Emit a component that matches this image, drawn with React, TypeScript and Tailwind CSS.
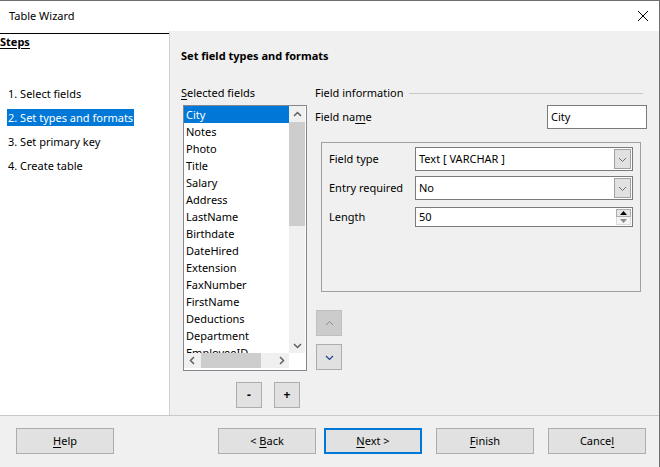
import * as React from 'react';

const steps = ['1. Select fields', '2. Set types and formats', '3. Set primary key', '4. Create table'];

const fields = [
  'City',
  'Notes',
  'Photo',
  'Title',
  'Salary',
  'Address',
  'LastName',
  'Birthdate',
  'DateHired',
  'Extension',
  'FaxNumber',
  'FirstName',
  'Deductions',
  'Department',
  'EmployeeID',
];

const chevrons = {
  up: '1,6 4.5,2.5 8,6',
  down: '1,3 4.5,6.5 8,3',
  left: '6,1 2.5,4.5 6,8',
  right: '3,1 6.5,4.5 3,8',
};

const Chevron = ({ dir, color = '#606060', width = 1.5 }: { dir: keyof typeof chevrons; color?: string; width?: number }) => (
  <svg width="9" height="9" viewBox="0 0 9 9">
    <polyline points={chevrons[dir]} fill="none" stroke={color} strokeWidth={width} />
  </svg>
);

const U = ({ children }: { children: React.ReactNode }) => (
  <span className="underline underline-offset-2">{children}</span>
);

const Combo = ({ value }: { value: string }) => (
  <div className="flex h-[24px] w-[218px] border border-[#7a7a7a] bg-white">
    <div className="flex flex-1 items-center pl-[3px]">{value}</div>
    <div className="my-px mr-px flex w-[17px] items-center justify-center border border-[#a0a0a0] bg-[#e1e1e1]">
      <Chevron dir="down" color="#707070" width={1} />
    </div>
  </div>
);

const Spin = ({ value }: { value: string }) => (
  <div className="flex h-[20px] w-[218px] border border-[#7a7a7a] bg-white">
    <div className="flex flex-1 items-center pl-[3px]">{value}</div>
    <div className="my-px mr-px flex w-[15px] flex-col">
      <div className="flex h-[8px] items-center justify-center border border-[#adadad] bg-[#e5e5e5]">
        <svg width="7" height="4" viewBox="0 0 7 4">
          <polygon points="0,4 3.5,0 7,4" fill="#000" />
        </svg>
      </div>
      <div className="flex flex-1 items-center justify-center border border-t-0 border-[#dadada] bg-[#f4f4f4]">
        <svg width="7" height="4" viewBox="0 0 7 4">
          <polygon points="0,0 3.5,4 7,0" fill="#8a8a8a" />
        </svg>
      </div>
    </div>
  </div>
);

const WizButton = ({ children, primary, className }: { children: React.ReactNode; primary?: boolean; className?: string }) => (
  <div
    className={`flex h-[26px] w-[98px] items-center justify-center bg-[#e1e1e1] ${
      primary ? 'border-2 border-[#0078d7]' : 'border border-[#adadad]'
    } ${className ?? ''}`}
  >
    {children}
  </div>
);

const SmallButton = ({ children, disabled }: { children: React.ReactNode; disabled?: boolean }) => (
  <div
    className={`flex h-[26px] w-[26px] items-center justify-center border ${
      disabled ? 'border-[#bfbfbf] bg-[#cccccc]' : 'border-[#adadad] bg-[#e1e1e1]'
    }`}
  >
    {children}
  </div>
);

export default function App() {
  return (
    <div className="flex h-[467px] w-[660px] flex-col overflow-hidden border-t border-r border-[#6e6e6e] bg-[#f0f0f0] font-['Noto_Sans',sans-serif] text-[11px] leading-[16px] text-black">
      {/* title bar */}
      <div className="flex h-[30px] shrink-0 items-center justify-between bg-white pl-[9px] pr-[11px]">
        <span>Table Wizard</span>
        <svg width="10" height="10" viewBox="0 0 10 10">
          <path d="M0 0L10 10M10 0L0 10" stroke="#000" strokeWidth="1" />
        </svg>
      </div>

      <div className="flex h-[384px] shrink-0">
        {/* steps panel */}
        <div className="w-[170px] border-r border-[#d0d0d0] bg-white">
          <div className="mt-[2px] border-t border-black">
            <div className="font-bold underline underline-offset-2">Steps</div>
            <div className="mt-[35px] flex flex-col gap-[7px] pl-[7px]">
              {steps.map((s, i) => (
                <div key={s} className="h-[17px] leading-[17px]">
                  <span className={`inline-block px-px ${i === 1 ? 'bg-[#0078d7] text-white' : ''}`}>{s}</span>
                </div>
              ))}
            </div>
          </div>
        </div>

        {/* page */}
        <div className="flex-1 pt-[17px]">
          <div className="pl-[11px] font-bold">Set field types and formats</div>

          <div className="mt-[21px] flex pl-[11px]">
            {/* selected fields */}
            <div className="w-[126px]">
              <div>
                <U>S</U>elected fields
              </div>
              <div className="ml-[2px] mt-[4px] flex h-[266px] w-[124px] flex-col border border-[#828790] bg-white">
                <div className="flex h-[247px]">
                  <div className="flex-1 overflow-hidden">
                    {fields.map((f, i) => (
                      <div
                        key={f}
                        className={`h-[17px] pl-[2px] leading-[17px] ${i === 0 ? 'bg-[#0078d7] text-white' : ''}`}
                      >
                        {f}
                      </div>
                    ))}
                  </div>
                  <div className="mr-px flex w-[16px] flex-col bg-[#f0f0f0]">
                    <div className="flex h-[16px] items-center justify-center">
                      <Chevron dir="up" />
                    </div>
                    <div className="h-[104px] bg-[#cdcdcd]" />
                    <div className="flex-1" />
                    <div className="flex h-[16px] items-center justify-center">
                      <Chevron dir="down" />
                    </div>
                  </div>
                </div>
                <div className="flex h-[15px]">
                  <div className="flex flex-1 bg-[#f0f0f0]">
                    <div className="flex w-[16px] items-center justify-center">
                      <Chevron dir="left" />
                    </div>
                    <div className="ml-px w-[60px] bg-[#cdcdcd]" />
                    <div className="flex-1" />
                    <div className="flex w-[16px] items-center justify-center">
                      <Chevron dir="right" />
                    </div>
                  </div>
                  <div className="w-[17px]" />
                </div>
              </div>
              <div className="ml-[55px] mt-[11px] flex gap-[12px] text-[12px] font-bold">
                <SmallButton>-</SmallButton>
                <SmallButton>+</SmallButton>
              </div>
            </div>

            {/* field information */}
            <div className="ml-[8px] w-[332px]">
              <div className="flex h-[16px] items-center">
                <span>Field information</span>
                <div className="ml-[5px] mr-[4px] h-px flex-1 bg-[#c8c8c8]" />
              </div>
              <div className="mt-[4px] flex h-[24px] items-center justify-between">
                <span>
                  Field na<U>m</U>e
                </span>
                <div className="flex h-[24px] w-[100px] items-center border border-[#7a7a7a] bg-white pl-[3px]">City</div>
              </div>

              <div className="ml-[6px] mt-[13px] flex h-[150px] w-[320px] flex-col border border-[#a0a0a0] pl-[7px] pt-[4px]">
                <div className="flex items-center">
                  <span className="w-[86px]">Field type</span>
                  <Combo value="Text [ VARCHAR ]" />
                </div>
                <div className="mt-[5px] flex items-center">
                  <span className="w-[86px]">Entry required</span>
                  <Combo value="No" />
                </div>
                <div className="mt-[7px] flex items-center">
                  <span className="w-[86px]">Length</span>
                  <Spin value="50" />
                </div>
              </div>

              <div className="ml-px mt-[18px] flex flex-col gap-[8px]">
                <SmallButton disabled>
                  <Chevron dir="up" color="#8a8a8a" width={1} />
                </SmallButton>
                <SmallButton>
                  <Chevron dir="down" color="#1f3f8f" width={1.2} />
                </SmallButton>
              </div>
            </div>
          </div>
        </div>
      </div>

      {/* buttons */}
      <div className="flex flex-1 border-t border-[#c8c8c8] pt-[12px]">
        <WizButton className="ml-[16px]">
          <span>
            <U>H</U>elp
          </span>
        </WizButton>
        <WizButton className="ml-[104px]">
          <span>
            &lt; <U>B</U>ack
          </span>
        </WizButton>
        <WizButton primary className="ml-[8px]">
          <span>
            <U>N</U>ext &gt;
          </span>
        </WizButton>
        <WizButton className="ml-[14px]">
          <span>
            <U>F</U>inish
          </span>
        </WizButton>
        <WizButton className="ml-[14px]">
          <span>
            Cance<U>l</U>
          </span>
        </WizButton>
      </div>
    </div>
  );
}
